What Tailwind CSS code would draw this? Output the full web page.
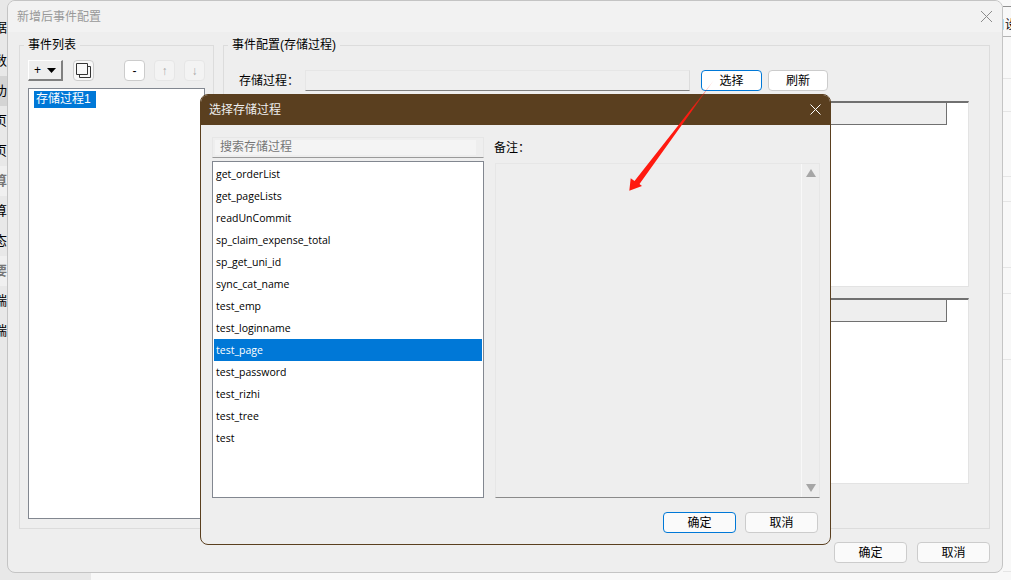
<!DOCTYPE html>
<html lang="zh-CN">
<head>
  <meta charset="UTF-8" />
  <title>新增后事件配置</title>
  <script src="https://cdn.jsdelivr.net/npm/@tailwindcss/browser@4"></script>
</head>
<body class="relative w-[1011px] h-[580px] overflow-hidden bg-[#f8f8f8] text-[12px] text-black font-['Liberation_Sans','Noto_Sans_CJK_SC',sans-serif]">

<!-- page behind the dialogs -->
<div class="flex h-[580px] justify-between">
  <div class="w-[91px] h-full bg-[#e8e8e8] pt-[13px] leading-[30px] text-[13px]">
    <div class="h-[33px] w-[7px] overflow-hidden flex justify-end"><span class="shrink-0">据</span></div>
    <div class="h-[30px] w-[7px] overflow-hidden flex justify-end"><span class="shrink-0">数</span></div>
    <div class="h-[30px] w-full bg-[#d4d4d4] overflow-hidden"><div class="w-[7px] overflow-hidden flex justify-end"><span class="shrink-0">功</span></div></div>
    <div class="h-[30px] w-[7px] overflow-hidden flex justify-end"><span class="shrink-0">页</span></div>
    <div class="h-[30px] w-[7px] overflow-hidden flex justify-end"><span class="shrink-0">页</span></div>
    <div class="h-[30px] w-full bg-[#f0f0f0]"><div class="w-[7px] overflow-hidden flex justify-end text-[#777] font-bold"><span class="shrink-0">算</span></div></div>
    <div class="h-[30px] w-[7px] overflow-hidden flex justify-end"><span class="shrink-0">算</span></div>
    <div class="h-[30px] w-[7px] overflow-hidden flex justify-end"><span class="shrink-0">态</span></div>
    <div class="h-[30px] w-full bg-[#f0f0f0]"><div class="w-[7px] overflow-hidden flex justify-end text-[#777] font-bold"><span class="shrink-0">要</span></div></div>
    <div class="h-[30px] w-[7px] overflow-hidden flex justify-end"><span class="shrink-0">端</span></div>
    <div class="h-[30px] w-[7px] overflow-hidden flex justify-end"><span class="shrink-0">端</span></div>
  </div>
  <div class="w-[8px] h-full overflow-hidden">
    <div class="h-[7px] border-b border-[#909090]"></div>
    <div class="h-[30px] leading-[36px] whitespace-nowrap border-b border-[#b4b4b4]"><span class="block -ml-[10px]">日设</span></div>
    <div class="h-[42px] border-b border-[#e5e5e5]"></div>
    <div class="h-[33px] border-b border-[#e5e5e5]"></div>
    <div class="h-[65px] border-b border-[#e5e5e5]"></div>
    <div class="h-[25px] border-b border-[#e5e5e5]"></div>
    <div class="h-[66px] border-b border-[#e5e5e5]"></div>
    <div class="h-[26px] border-b border-[#e5e5e5]"></div>
    <div class="h-[66px] border-b border-[#e5e5e5]"></div>
    <div class="h-[212px] border-b border-[#e5e5e5]"></div>
  </div>
</div>

<!-- outer dialog -->
<div class="absolute left-[7px] top-0 w-[996px] h-[573px] flex flex-col bg-[#eeeeee] border border-[#c4c4c4] rounded-[8px] overflow-hidden">
  <div class="h-[31px] shrink-0 bg-[#f2f2f2] flex items-center justify-between pl-[9px] pr-[9px]">
    <span class="text-[#999999] leading-none">新增后事件配置</span>
    <svg width="13" height="13" viewBox="0 0 13 13" fill="none" stroke="#8c8c8c" stroke-width="1"><path d="M1 1l11 11M12 1L1 12"/></svg>
  </div>
  <div class="flex gap-[9px] pl-[11px] mt-[4px] h-[493px]">
    <fieldset class="w-[195px] h-[493px] border border-[#dcdcdc] pl-[8px] pr-[7px] min-w-0">
      <legend class="-ml-[4px] px-[4px] h-[18px] leading-[18px]">事件列表</legend>
      <div class="flex items-center h-[21px] mt-[6px]">
        <button class="w-[35px] h-[21px] bg-[#eeeeee] border-t border-l border-t-white border-l-white border-r-2 border-b-2 border-r-[#808080] border-b-[#808080] flex items-center justify-center gap-[6px] leading-none text-[12px]">
          +<svg width="9" height="5" viewBox="0 0 9 5"><path d="M0 0h9L4.500 5z" fill="#000"/></svg>
        </button>
        <button class="ml-[10px] w-[21px] h-[21px] bg-[#f8f8f8] border border-[#cccccc] rounded-[4px] flex items-center justify-center">
          <svg width="15" height="15" viewBox="0 0 15 15" fill="none" stroke="#333" stroke-width="1"><path d="M3.500 3.500h11v11h-11z"/><path d="M.5.5h11v11H.5z" fill="#f8f8f8"/></svg>
        </button>
        <button class="ml-[30px] w-[21px] h-[21px] bg-white border border-[#cccccc] rounded-[4px] text-[12px] leading-none">-</button>
        <button class="ml-[9px] w-[21px] h-[21px] bg-[#f3f3f3] border border-[#e6e6e6] rounded-[4px] text-[#a8a8a8] text-[12px] leading-none">↑</button>
        <button class="ml-[9px] w-[21px] h-[21px] bg-[#f3f3f3] border border-[#e6e6e6] rounded-[4px] text-[#a8a8a8] text-[12px] leading-none">↓</button>
      </div>
      <div class="mt-[7px] h-[431px] w-[177px] bg-white border border-[#828790] pl-[5px] pt-px">
        <span class="inline-block w-[62px] h-[17px] leading-[17px] pl-[2px] bg-[#0078d7] text-white whitespace-nowrap">存储过程1</span>
      </div>
    </fieldset>

    <fieldset class="w-[767px] h-[493px] border border-[#dcdcdc] pl-[8px] pr-[20px] min-w-0">
      <legend class="-ml-[4px] px-[4px] h-[18px] leading-[18px]">事件配置(存储过程)</legend>
      <div class="flex items-center h-[21px] mt-[16px]">
        <span class="ml-[7px] w-[66px] whitespace-nowrap">存储过程：</span>
        <div class="w-[385px] h-[21px] bg-[#efefef] border border-[#e6e6e6] border-b-[#808080] border-r-[#dcdcdc]"></div>
        <button class="ml-[11px] w-[61px] h-[21px] bg-white border border-[#0078d7] rounded-[4px] leading-none">选择</button>
        <button class="ml-[6px] w-[60px] h-[21px] bg-white border border-[#cccccc] rounded-[4px] leading-none">刷新</button>
      </div>
      <div class="mt-[10px] h-[186px] bg-white border-t-2 border-t-[#707070] border-r border-b border-[#e3e3e3]">
        <div class="w-[715px] h-[22px] bg-[#eeeeee] border-r border-b border-[#707070]"></div>
      </div>
      <div class="mt-[11px] h-[186px] bg-white border-t-2 border-t-[#707070] border-r border-b border-[#e3e3e3]">
        <div class="w-[715px] h-[22px] bg-[#eeeeee] border-r border-b border-[#707070]"></div>
      </div>
    </fieldset>
  </div>
  <div class="flex justify-end gap-[10px] pr-[12px] mt-[13px]">
    <button class="w-[73px] h-[21px] bg-[#fafafa] border border-[#cccccc] rounded-[4px] leading-none">确定</button>
    <button class="w-[73px] h-[21px] bg-[#fafafa] border border-[#cccccc] rounded-[4px] leading-none">取消</button>
  </div>
</div>

<!-- inner dialog -->
<div class="absolute left-[200px] top-[94px] w-[631px] h-[451px] flex flex-col bg-[#eeeeee] border border-[#5a3f1f] rounded-[8px] overflow-hidden">
  <div class="h-[31px] shrink-0 bg-[#5a3f1f] flex items-center justify-between pl-[9px] pr-[10px] -mx-px -mt-px">
    <span class="text-[#eeeeee] leading-none">选择存储过程</span>
    <svg width="11" height="11" viewBox="0 0 11 11" fill="none" stroke="#fff" stroke-width="1"><path d="M.5.5l10 10M10.5.5l-10 10"/></svg>
  </div>
  <div class="flex pl-[11px] mt-[12px]">
    <div class="w-[272px]">
      <div class="h-[21px] border border-[#e6e6e6] border-b-[#9a9a9a] pl-[2px] py-[2px]">
        <div class="h-[15px] w-[261px] bg-[#f4f4f4] pl-[5px] leading-[15px] text-[#767676]">搜索存储过程</div>
      </div>
      <ul class="mt-[3px] h-[337px] bg-white border border-[#828790] pt-px px-px font-['Open_Sans','Noto_Sans_CJK_SC',sans-serif] text-[10.5px] text-black">
        <li class="h-[22px] leading-[22px] pl-[2px]">get_orderList</li>
        <li class="h-[22px] leading-[22px] pl-[2px]">get_pageLists</li>
        <li class="h-[22px] leading-[22px] pl-[2px]">readUnCommit</li>
        <li class="h-[22px] leading-[22px] pl-[2px]">sp_claim_expense_total</li>
        <li class="h-[22px] leading-[22px] pl-[2px]">sp_get_uni_id</li>
        <li class="h-[22px] leading-[22px] pl-[2px]">sync_cat_name</li>
        <li class="h-[22px] leading-[22px] pl-[2px]">test_emp</li>
        <li class="h-[22px] leading-[22px] pl-[2px]">test_loginname</li>
        <li class="h-[22px] leading-[22px] pl-[2px] bg-[#0078d7] text-white">test_page</li>
        <li class="h-[22px] leading-[22px] pl-[2px]">test_password</li>
        <li class="h-[22px] leading-[22px] pl-[2px]">test_rizhi</li>
        <li class="h-[22px] leading-[22px] pl-[2px]">test_tree</li>
        <li class="h-[22px] leading-[22px] pl-[2px]">test</li>
      </ul>
    </div>
    <div class="ml-[10px] w-[326px]">
      <div class="h-[26px] leading-[22px]">备注：</div>
      <div class="ml-px h-[335px] border border-[#e6e6e6] border-b-[#8a8a8a] flex justify-end">
        <div class="w-[18px] h-full border-l border-[#f8f8f8] flex flex-col justify-between items-center py-[5px]">
          <svg width="10" height="8" viewBox="0 0 10 8"><path d="M5 0l5 8H0z" fill="#a6a6a6"/></svg>
          <svg width="10" height="8" viewBox="0 0 10 8"><path d="M0 0h10L5 8z" fill="#a6a6a6"/></svg>
        </div>
      </div>
    </div>
  </div>
  <div class="flex justify-end gap-[9px] pr-[12px] mt-[14px]">
    <button class="w-[73px] h-[21px] bg-[#fafafa] border border-[#0078d7] rounded-[4px] leading-none">确定</button>
    <button class="w-[73px] h-[21px] bg-[#fafafa] border border-[#cccccc] rounded-[4px] leading-none">取消</button>
  </div>
</div>

<!-- red annotation arrow -->
<svg class="absolute left-0 top-0 pointer-events-none" width="1011" height="580" viewBox="0 0 1011 580">
  <defs><linearGradient id="fade" x1="713" y1="80" x2="690" y2="112" gradientUnits="userSpaceOnUse"><stop offset="0" stop-color="#ff1a10" stop-opacity="0.15"/><stop offset="1" stop-color="#ff1a10"/></linearGradient></defs>
  <path d="M714 80L639.500 184L642 186L629.300 190.700L630.700 178.300L634.500 181Z" fill="url(#fade)" />
</svg>

</body>
</html>
